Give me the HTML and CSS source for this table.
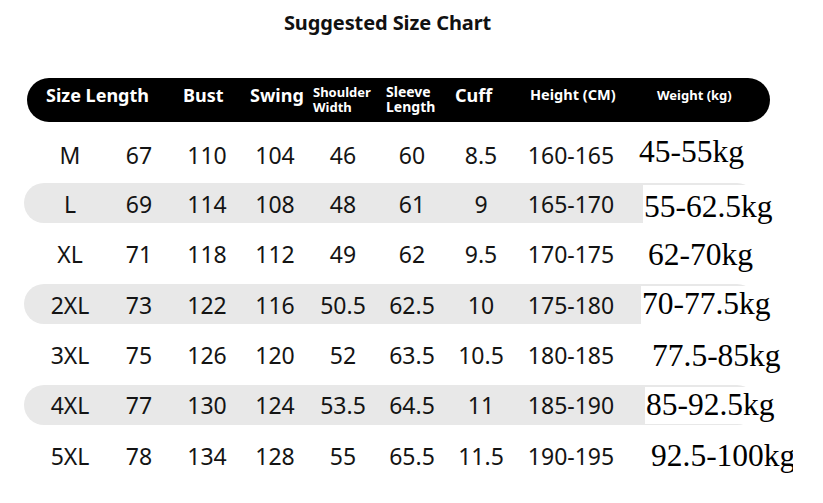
FILE: index.html
```html
<!DOCTYPE html>
<html lang="en">
<head>
<meta charset="utf-8">
<title>Suggested Size Chart</title>
<link rel="stylesheet" href="styles.css">
</head>
<body>
<div class="sheet">
  <h1 class="title">Suggested Size Chart</h1>
  <div class="head">
    <div class="h-big">Size Length</div>
    <div class="h-big">Bust</div>
    <div class="h-big">Swing</div>
    <div class="h-two h-shoulder"><span>Shoulder</span><span>Width</span></div>
    <div class="h-two h-sleeve"><span>Sleeve</span><span>Length</span></div>
    <div class="h-big">Cuff</div>
    <div class="h-mid">Height (CM)</div>
    <div class="h-small">Weight (kg)</div>
  </div>
  <div class="rows">
    <div class="row"><span>M</span><span>67</span><span>110</span><span>104</span><span>46</span><span>60</span><span>8.5</span><span>160-165</span><div class="wt"><span>45-55kg</span></div></div>
    <div class="row alt"><span>L</span><span>69</span><span>114</span><span>108</span><span>48</span><span>61</span><span>9</span><span>165-170</span><div class="wt"><span>55-62.5kg</span></div></div>
    <div class="row"><span>XL</span><span>71</span><span>118</span><span>112</span><span>49</span><span>62</span><span>9.5</span><span>170-175</span><div class="wt"><span>62-70kg</span></div></div>
    <div class="row alt"><span>2XL</span><span>73</span><span>122</span><span>116</span><span>50.5</span><span>62.5</span><span>10</span><span>175-180</span><div class="wt"><span>70-77.5kg</span></div></div>
    <div class="row"><span>3XL</span><span>75</span><span>126</span><span>120</span><span>52</span><span>63.5</span><span>10.5</span><span>180-185</span><div class="wt"><span>77.5-85kg</span></div></div>
    <div class="row alt"><span>4XL</span><span>77</span><span>130</span><span>124</span><span>53.5</span><span>64.5</span><span>11</span><span>185-190</span><div class="wt"><span>85-92.5kg</span></div></div>
    <div class="row"><span>5XL</span><span>78</span><span>134</span><span>128</span><span>55</span><span>65.5</span><span>11.5</span><span>190-195</span><div class="wt"><span>92.5-100kg</span></div></div>
  </div>
</div>
</body>
</html>
```
FILE: styles.css
```css
* { box-sizing: border-box; }
html, body { margin: 0; padding: 0; background: #fff; }
body { font-family: "Noto Sans", "Open Sans", sans-serif; color: #111; }

.sheet {
  width: 793px;
  height: 503px;
  overflow: hidden;
}

.title {
  margin: 9px 0 0 0;
  width: 775px;
  text-align: center;
  font-size: 20px;
  font-weight: 700;
  line-height: 27px;
  color: #111;
  letter-spacing: -0.1px;
}

.head {
  margin: 42px 0 0 27px;
  width: 743px;
  height: 44px;
  background: #000;
  border-radius: 22px;
  color: #fff;
  display: grid;
  grid-template-columns: 137px 67px 63px 73px 69px 75px 127px 1fr;
  padding-left: 19px;
  align-items: start;
  font-weight: 700;
}

.h-big {
  font-size: 18px;
  line-height: 24px;
  padding-top: 5px;
  white-space: nowrap;
}
.h-two {
  display: flex;
  flex-direction: column;
  padding-top: 5px;
  white-space: nowrap;
}
.h-two > span { display: block; height: 15px; line-height: 18px; }
.h-shoulder { font-size: 13px; }
.h-sleeve { font-size: 14px; }
.h-mid {
  font-size: 14.5px;
  line-height: 20px;
  padding-top: 6px;
  white-space: nowrap;
}
.h-small {
  font-size: 13px;
  line-height: 18px;
  padding-top: 8px;
  white-space: nowrap;
}

.rows {
  margin: 10.5px 0 0 24px;
  display: flex;
  flex-direction: column;
  gap: 10.6px;
}

.row {
  width: 733px;
  height: 40px;
  border-radius: 20px;
  display: grid;
  grid-template-columns: 92px 46px 90px 46px 90px 48px 90px 90px 1fr;
  align-items: center;
  font-size: 23px;
  color: #141414;
}
.row > span {
  text-align: center;
  white-space: nowrap;
  display: flex;
  justify-content: center;
  padding-bottom: 1px;
}
.row.alt { background: #e8e8e8; }

.wt {
  align-self: stretch;
  display: flex;
  min-width: 0;
}
.wt > span {
  flex: 1;
  margin: 1.5px 4px 1.5px 0;
  background: #fff;
  display: flex;
  align-items: center;
  font-family: "Liberation Serif", "Times New Roman", serif;
  font-size: 31.5px;
  color: #000;
  white-space: nowrap;
  padding-left: 1px;
}

.row:nth-child(1) .wt > span { margin-left: 22px; padding-bottom: 6px; }
.row:nth-child(2) .wt > span { margin-left: 27px; padding-top: 4px; }
.row:nth-child(3) .wt > span { margin-left: 31px; padding-top: 2px; }
.row:nth-child(4) .wt > span { margin-left: 25px; padding-bottom: 3px; }
.row:nth-child(5) .wt > span { margin-left: 35px; padding-top: 2px; }
.row:nth-child(6) .wt > span { margin-left: 29px; }
.row:nth-child(7) .wt > span { margin-left: 34px; }
```
